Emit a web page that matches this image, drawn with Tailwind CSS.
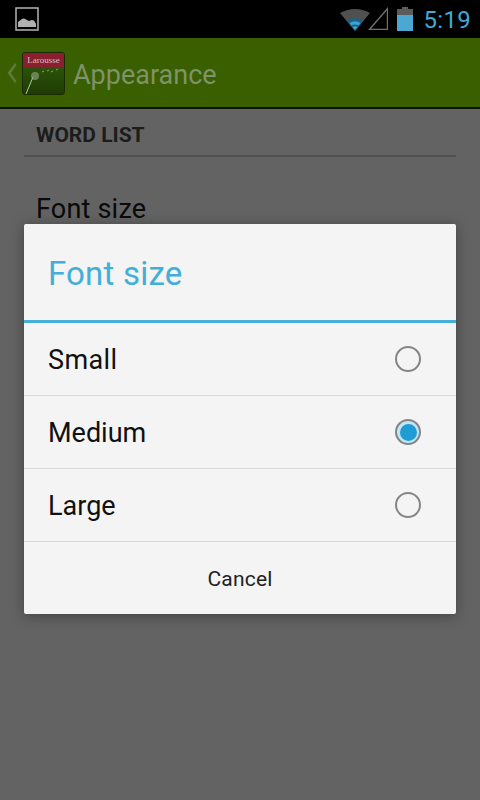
<!DOCTYPE html>
<html><head><meta charset="utf-8">
<script src="https://cdn.jsdelivr.net/npm/@tailwindcss/browser@4"></script>
</head>
<body class="m-0">
<div class="relative w-[480px] h-[800px] overflow-hidden bg-[#636363] font-['Roboto','Liberation_Sans',sans-serif]">
  <div class="h-[38px] bg-black flex items-center pl-[15px] pr-[9px]">
    <svg width="24" height="24" viewBox="0 0 24 24">
      <rect x="1" y="1" width="22" height="22" fill="none" stroke="#b4b4b4" stroke-width="1.5"/>
      <path d="M3 20 L3 15 L7 12 Q9 11 11 12.500 L14 14 L17 13 Q19 13 20 15 L21 17 L21 20 Z" fill="#b0b0b0"/>
    </svg>
    <div class="ml-auto flex items-center">
      <svg width="32" height="24" viewBox="0 0 32 24" class="mr-[-3px] mt-[1px]">
        <path d="M1 5 Q16 -3 31 5 L16 23 Z" fill="#505050"/>
        <path d="M7.500 12.500 Q16 7.500 24.500 12.500 L16 23 Z" fill="#1f5f80"/>
        <path d="M10.500 15 Q16 11.500 21.500 15 L19.500 17.500 Q16 15.500 12.500 17.500 Z" fill="#35a4d6"/>
        <path d="M13.500 19 Q16 17.500 18.500 19 L16 22 Z" fill="#35a4d6"/>
      </svg>
      <svg width="20" height="24" viewBox="0 0 20 24">
        <path d="M0 23 L20 23 L20 0 Z M3 21.800 L18.800 21.800 L18.800 3.500 Z" fill="#707070" fill-rule="evenodd"/>
      </svg>
      <svg width="16" height="24" viewBox="0 0 16 24" class="ml-[9px]">
        <rect x="5" y="0" width="6" height="2" fill="#5c5c5c"/>
        <rect x="0" y="2" width="16" height="6" fill="#5c5c5c"/>
        <rect x="0" y="8" width="16" height="16" fill="#4aa8d2"/>
      </svg>
      <span class="ml-[11px] mt-[1px] text-[24px] leading-[38px] text-[#3fa9d8] tracking-[0.3px]">5:19</span>
    </div>
  </div>
  <div class="h-[71px] bg-[#3a5f00] border-b-[2px] border-[#0d1500] flex items-center pl-[6px]">
    <svg width="12" height="24" viewBox="0 0 12 24">
      <path d="M9 2 L1.500 12 L9 22 L10.500 20 L5 12 L10.500 4 Z" fill="#5d7a3a"/>
    </svg>
    <div class="ml-[4px] mt-[2px] w-[43px] h-[43px] rounded-[3px] border border-[#1a2a00] bg-gradient-to-b from-[#33600c] to-[#1e3c04] overflow-hidden">
      <div class="h-[14px] bg-[#8a1f30] text-[#d8c0c0] font-['Liberation_Serif',serif] text-[9px] leading-[14px] text-center">Larousse</div>
      <svg width="41" height="28" viewBox="0 0 41 28" class="block">
        <path d="M3 27 L10 10" stroke="#b8c4a8" stroke-width="1" fill="none"/>
        <circle cx="12" cy="9" r="4" fill="#9aa88a" opacity=".6"/>
        <path d="M19 5 L21 4 M24 4 L26 3 M28 5 L30 4 M33 3 L35 2" stroke="#8fa07a" stroke-width="1" fill="none"/>
      </svg>
    </div>
    <span class="ml-[8px] mt-[5px] text-[27px] leading-[36px] text-[#7f9268]">Appearance</span>
  </div>
  <div class="px-[24px]">
    <div class="h-[48px] border-b-[2px] border-[#4f4f4f] px-[12px] pt-[14px] text-[21px] leading-[24px] font-bold text-[#1c1c1c]">WORD LIST</div>
    <div class="px-[12px] pt-[36px] text-[27px] leading-[32px] text-[#0a0a0a] tracking-[0.2px]">Font size</div>
  </div>
  <div class="absolute left-[24px] top-[224px] w-[432px] bg-[#f4f4f4] rounded-[2px] shadow-[0_2px_14px_rgba(0,0,0,0.35)]">
    <div class="h-[99px] border-b-[3px] border-[#45b0d8] px-[24px] flex items-center">
      <span class="text-[33px] mt-[4px] leading-[40px] text-[#41afd9] tracking-[0.2px]">Font size</span>
    </div>
    <div class="h-[73px] border-b border-[#d9d9d9] px-[24px] flex items-center justify-between">
      <span class="text-[27px] mt-[3px] text-[#111] tracking-[0.4px]">Small</span>
      <span class="w-[26px] h-[26px] mr-[11px] rounded-full border-[2px] border-[#858585]"></span>
    </div>
    <div class="h-[73px] border-b border-[#d9d9d9] px-[24px] flex items-center justify-between">
      <span class="text-[27px] mt-[3px] text-[#111]">Medium</span>
      <span class="w-[26px] h-[26px] mr-[11px] rounded-full border-[2px] border-[#858585] bg-[#bfe6f4] flex items-center justify-center">
        <span class="w-[17px] h-[17px] rounded-full bg-[#1f9bd6]"></span>
      </span>
    </div>
    <div class="h-[73px] border-b border-[#d9d9d9] px-[24px] flex items-center justify-between">
      <span class="text-[27px] mt-[3px] text-[#111]">Large</span>
      <span class="w-[26px] h-[26px] mr-[11px] rounded-full border-[2px] border-[#858585]"></span>
    </div>
    <div class="h-[72px] flex items-center justify-center pt-[3px] text-[21px] text-[#222] tracking-[0.2px]">Cancel</div>
  </div>
</div>
</body></html>
